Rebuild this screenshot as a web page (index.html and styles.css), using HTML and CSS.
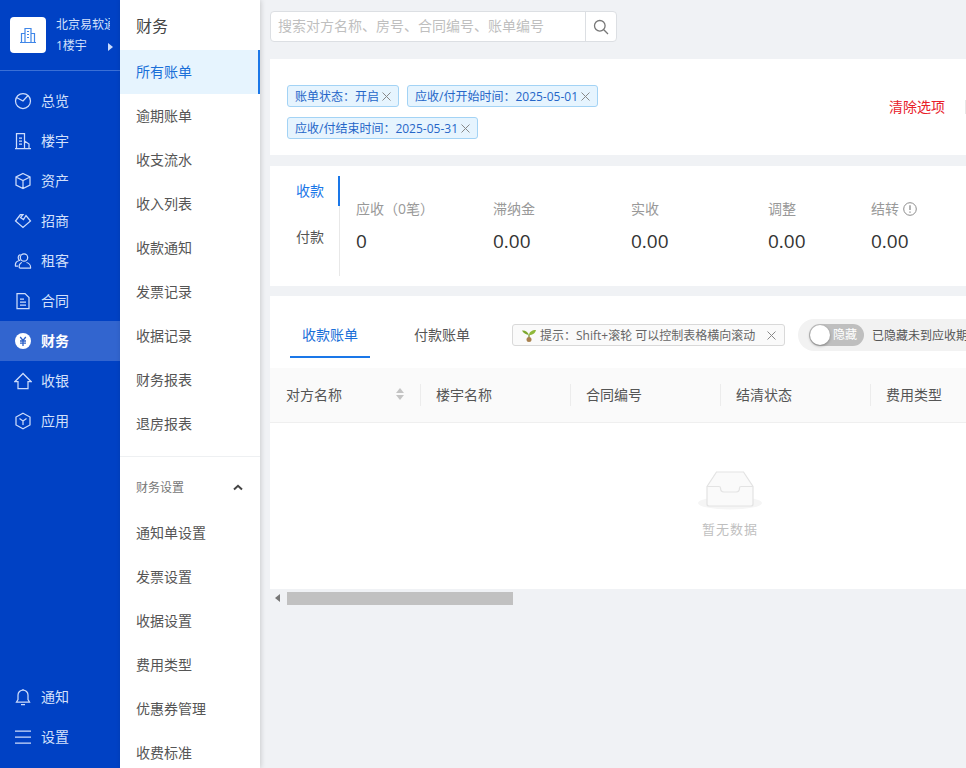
FILE: index.html
```html
<!DOCTYPE html>
<html lang="zh-CN">
<head>
<meta charset="utf-8">
<title>财务</title>
<link rel="stylesheet" href="styles.css">
</head>
<body>
<div class="app">
  <aside class="rail">
    <div class="org">
      <div class="org-logo">
        <svg width="18" height="18" viewBox="0 0 18 18" fill="none" stroke="#3f86e8" stroke-width="1.2"><path d="M1 16.500h16M6 16.500V2.500h6v14M2.500 16.500V7.500H6M12 7.500h3.500v9M8 5.500h2M8 8.500h2M8 11.500h2"/></svg>
      </div>
      <div class="org-text">
        <div class="org-name">北京易软通</div>
        <div class="org-sub"><span>1楼宇</span><i class="org-arrow"></i></div>
      </div>
    </div>
    <nav class="rail-nav">
      <a class="rail-item"><svg class="ri" viewBox="0 0 18 18"><circle cx="9" cy="9" r="7.500"/><path d="M2.500 5.500 9 9l5-5.500"/></svg>总览</a>
      <a class="rail-item"><svg class="ri" viewBox="0 0 18 18"><path d="M1 16.500h16M2.500 16.500V1.500h8v15M10.500 9l4.500 3v4.500M5 6h3M5 9h3M5 12h3"/></svg>楼宇</a>
      <a class="rail-item"><svg class="ri" viewBox="0 0 18 18"><path d="M9 1.500l7 3.500v8l-7 3.500L2 13V5zM2 5l7 3.500L16 5M9 8.500v8"/></svg>资产</a>
      <a class="rail-item"><svg class="ri" viewBox="0 0 18 18"><path d="M6.500 2.500 1.500 9 9 15.500 16.500 9 12 3.500 9.500 7.500 6.500 5.500 9 2.500z"/></svg>招商</a>
      <a class="rail-item"><svg class="ri" viewBox="0 0 18 18"><circle cx="10" cy="5.500" r="3.700"/><path d="M5.500 16h11c.5-3-2-5-4-5.500M8 10.500c-2 .5-3.500 3-2.500 5.500M6.500 2.500C4 3 3.500 6.500 5.500 8.500 3 9 1 11 1.500 14h2.500"/></svg>租客</a>
      <a class="rail-item"><svg class="ri" viewBox="0 0 18 18"><path d="M3 1.500h8l4 4v11H3zM6 7h4M6 10h6M6 13h6"/></svg>合同</a>
      <a class="rail-item rail-active"><svg class="ri-solid" viewBox="0 0 18 18"><circle cx="9" cy="9" r="8" fill="#fff"/><path d="M6.200 5 9 8.500 11.800 5M6 9h6M6 11.200h6M9 8.500V14" fill="none" stroke="#2f62c9" stroke-width="1.300"/></svg>财务</a>
      <a class="rail-item"><svg class="ri" viewBox="0 0 18 18"><path d="M9 1.500 1 9.500h3v7h10v-7h3z"/></svg>收银</a>
      <a class="rail-item"><svg class="ri" viewBox="0 0 18 18"><path d="M9 1.200 16 5v8l-7 3.800L2 13V5z"/><path d="M5.500 6.500 9 9l3.500-2.500M9 9v4"/></svg>应用</a>
    </nav>
    <div class="rail-bottom">
      <a class="rail-item"><svg class="ri" viewBox="0 0 18 18"><path d="M2.500 14h13l-1.500-2.500V7A5 5 0 0 0 4 7v4.500zM7 16.500h4M9 2V1"/></svg>通知</a>
      <a class="rail-item"><svg class="ri" viewBox="0 0 18 18"><path d="M1 3h16M1 9h16M1 15h16"/></svg>设置</a>
    </div>
  </aside>

  <aside class="sub">
    <h2 class="sub-title">财务</h2>
    <a class="sub-item sub-active">所有账单</a>
    <a class="sub-item">逾期账单</a>
    <a class="sub-item">收支流水</a>
    <a class="sub-item">收入列表</a>
    <a class="sub-item">收款通知</a>
    <a class="sub-item">发票记录</a>
    <a class="sub-item">收据记录</a>
    <a class="sub-item">财务报表</a>
    <a class="sub-item">退房报表</a>
    <div class="sub-group">
      <span>财务设置</span>
      <svg width="10" height="7" viewBox="0 0 10 7" fill="none" stroke="#444" stroke-width="2"><path d="M1 5.500 5 1.800l4 3.700"/></svg>
    </div>
    <a class="sub-item">通知单设置</a>
    <a class="sub-item">发票设置</a>
    <a class="sub-item">收据设置</a>
    <a class="sub-item">费用类型</a>
    <a class="sub-item">优惠券管理</a>
    <a class="sub-item">收费标准</a>
  </aside>

  <main class="main">
    <div class="search">
      <div class="search-input">搜索对方名称、房号、合同编号、账单编号</div>
      <div class="search-btn">
        <svg width="16" height="16" viewBox="0 0 16 16" fill="none" stroke="#777" stroke-width="1.300"><circle cx="6.800" cy="6.800" r="5.300"/><path d="m10.800 10.800 4.200 4.200"/></svg>
      </div>
    </div>

    <section class="card filters">
      <div class="tags">
        <span class="tag">账单状态：开启<svg class="x" viewBox="0 0 9 9"><path d="M.5.500l8 8M8.500.500l-8 8"/></svg></span>
        <span class="tag">应收/付开始时间：2025-05-01<svg class="x" viewBox="0 0 9 9"><path d="M.5.500l8 8M8.500.500l-8 8"/></svg></span>
        <span class="tag">应收/付结束时间：2025-05-31<svg class="x" viewBox="0 0 9 9"><path d="M.5.500l8 8M8.500.500l-8 8"/></svg></span>
      </div>
      <a class="clear">清除选项</a>
      <span class="more-btn"></span>
    </section>

    <section class="card stats">
      <div class="stat-tabs">
        <a class="stat-tab stat-tab-on">收款</a>
        <a class="stat-tab">付款</a>
      </div>
      <div class="stat-grid">
        <div><div class="stat-label">应收（0笔）</div><div class="stat-val">0</div></div>
        <div><div class="stat-label">滞纳金</div><div class="stat-val">0.00</div></div>
        <div><div class="stat-label">实收</div><div class="stat-val">0.00</div></div>
        <div><div class="stat-label">调整</div><div class="stat-val">0.00</div></div>
        <div><div class="stat-label">结转<svg class="info" width="14" height="14" viewBox="0 0 14 14" fill="none" stroke="#8c8c8c"><circle cx="7" cy="7" r="6.300"/><path d="M7 3.300v4.700M7 9.500v1.300" stroke-width="1.300"/></svg></div><div class="stat-val">0.00</div></div>
      </div>
    </section>

    <section class="card table-card">
      <div class="toolbar">
        <div class="tabs">
          <a class="tab tab-on">收款账单</a>
          <a class="tab">付款账单</a>
        </div>
        <div class="hint">
          <svg width="16" height="16" viewBox="0 0 16 16"><path d="M8 8C7 5 4 3 1 3.500 2 6 5 7.500 8 8z" fill="#7da82f"/><path d="M8 8c0-3 3-5 7-5-.5 3-3.500 5-7 5z" fill="#8fb83a"/><path d="M8 8v3" stroke="#6b8a2a" stroke-width="1.200"/><circle cx="8" cy="12.500" r="2.500" fill="#a8814e"/></svg>
          <span class="hint-text">提示：Shift+滚轮 可以控制表格横向滚动</span>
          <svg class="x hint-x" viewBox="0 0 9 9"><path d="M.5.500l8 8M8.500.500l-8 8"/></svg>
        </div>
        <div class="toggle-wrap">
          <span class="toggle"><i class="knob"></i><span class="toggle-label">隐藏</span></span>
          <span class="toggle-text">已隐藏未到应收期的账单</span>
        </div>
      </div>
      <div class="thead">
        <div class="th th-first">对方名称<span class="sorter"><i class="up"></i><i class="down"></i></span></div>
        <div class="th">楼宇名称</div>
        <div class="th">合同编号</div>
        <div class="th">结清状态</div>
        <div class="th">费用类型</div>
      </div>
      <div class="empty">
        <svg width="64" height="42" viewBox="0 0 64 42">
          <ellipse cx="32" cy="35" rx="32" ry="6.500" fill="#f5f5f5"/>
          <path d="M9 18.500 18.500 4h27L55 18.500V36a2 2 0 0 1-2 2H11a2 2 0 0 1-2-2z" fill="#fafafa" stroke="#e3e3e3" stroke-width="1.200"/>
          <path d="M9 18.500h12c1 0 1.500 .5 1.500 1.500 0 3 1.500 4 3.500 4h12c2 0 3.500-1 3.500-4 0-1 .5-1.500 1.500-1.500H55" fill="none" stroke="#e3e3e3" stroke-width="1.200"/>
        </svg>
        <div class="empty-text">暂无数据</div>
      </div>
    </section>

    <div class="hscroll">
      <i class="hscroll-left"></i>
      <i class="hscroll-thumb"></i>
    </div>
  </main>
</div>
</body>
</html>
```

FILE: styles.css
```css
* { box-sizing: border-box; }
html, body { margin: 0; padding: 0; height: 100%; overflow: hidden; }
body { font-family: "Open Sans", "Noto Sans CJK SC", sans-serif; font-size: 14px; color: #333; background: #f0f2f5; }
a { text-decoration: none; color: inherit; }
i { font-style: normal; }

.app { display: flex; width: 966px; height: 768px; overflow: hidden; }

/* primary rail */
.rail { flex: none; width: 120px; height: 100%; background: #0041c4; display: flex; flex-direction: column; color: #d3e0fb; }
.org { height: 71px; padding: 17px 0 0 10px; display: flex; border-bottom: 1px solid #3a6fd6; }
.org-logo { width: 36px; height: 36px; background: #fff; border-radius: 4px; display: flex; align-items: center; justify-content: center; }
.org-text { width: 54px; margin-left: 10px; font-size: 12px; line-height: 21px; }
.org-name { margin-top: -3px; white-space: nowrap; overflow: hidden; height: 21px; }
.org-sub { display: flex; align-items: center; justify-content: space-between; width: 57px; }
.org-arrow { width: 0; height: 0; margin-top: 3px; border-left: 5px solid #c9dafb; border-top: 4px solid transparent; border-bottom: 4px solid transparent; }
.rail-nav { margin-top: 10px; flex: 1; }
.rail-item { display: flex; align-items: center; height: 40px; padding-left: 14px; font-size: 14px; line-height: 40px; }
.ri { width: 18px; height: 18px; margin-right: 9px; fill: none; stroke: #cddcfb; stroke-width: 1.250; flex: none; }
.ri-solid { width: 18px; height: 18px; margin-right: 9px; flex: none; }
.rail-active { background: #3265cf; color: #fff; font-weight: 700; }
.rail-bottom { padding-bottom: 11px; }

/* secondary menu */
.sub { position: relative; z-index: 2; flex: none; width: 140px; height: 100%; background: #fff; box-shadow: 1px 0 5px rgba(0, 0, 0, .16); overflow: hidden; }
.sub-title { margin: 0; height: 50px; padding-left: 16px; font-size: 16px; font-weight: 400; line-height: 52px; color: #444; }
.sub-item { display: block; height: 44px; padding-left: 16px; line-height: 44px; font-size: 14px; color: #555; }
.sub-active { background: #e6f4fe; color: #1a6fd8; border-right: 2px solid #1a77e8; }
.sub-group { display: flex; align-items: center; justify-content: space-between; height: 55px; margin-top: 10px; padding: 6px 17px 0 16px; border-top: 1px solid #eef0f2; font-size: 12px; color: #777; }

/* main column */
.main { flex: 1; min-width: 0; padding: 11px 0 0 10px; overflow: hidden; }
.search { display: flex; width: 347px; height: 31px; background: #fff; border: 1px solid #dcdfe3; border-radius: 4px; }
.search-input { flex: 1; padding-left: 7px; line-height: 28px; font-size: 14px; color: #bfbfbf; white-space: nowrap; }
.search-btn { flex: none; width: 31px; border-left: 1px solid #dcdfe3; display: flex; align-items: center; justify-content: center; }

.card { background: #fff; width: 1000px; }

.filters { display: flex; align-items: center; height: 96px; margin-top: 17px; padding-left: 17px; }
.tags { display: flex; flex-wrap: wrap; align-content: center; gap: 10px 8px; width: 602px; padding: 10px 280px 0 0; }
.tag { display: inline-flex; align-items: center; height: 22px; padding: 0 7px; background: #e6f4fe; border: 1px solid #a3d3f5; border-radius: 3px; font-size: 12px; color: #2566c8; white-space: nowrap; }
.x { flex: none; width: 9px; height: 9px; margin-left: 3px; fill: none; stroke: #888; stroke-width: 1; }
.clear { color: #e8202a; font-size: 14px; width: 56px; margin-top: -2px; white-space: nowrap; }
.more-btn { width: 40px; height: 14px; margin-left: 20px; border-left: 1px solid #e8e8e8; }

.stats { display: flex; height: 120px; margin-top: 11px; padding-top: 10px; }
.stat-tabs { flex: none; width: 70px; height: 100px; border-right: 1px solid #e8e8e8; }
.stat-tab { display: block; height: 30px; margin-right: -1px; padding-left: 26px; line-height: 30px; font-size: 14px; color: #555; }
.stat-tab + .stat-tab { margin-top: 16px; }
.stat-tab-on { color: #1a77e8; border-right: 2px solid #1a77e8; }
.stat-grid { display: grid; grid-template-columns: 137px 138px 137px 103px 137px; margin-left: 16px; padding-top: 23px; }
.stat-label { height: 20px; line-height: 20px; font-size: 14px; color: #999; display: flex; align-items: center; white-space: nowrap; }
.info { margin-left: 4px; }
.stat-val { margin-top: 10px; font-size: 19px; line-height: 24px; color: #333; }

.table-card { margin-top: 10px; height: 293px; display: flex; flex-direction: column; }
.toolbar { display: flex; align-items: center; height: 72px; padding-left: 20px; }
.tabs { display: flex; align-self: flex-start; height: 62px; flex: none; }
.tab { display: block; width: 80px; height: 62px; padding-top: 28px; text-align: center; line-height: 22px; font-size: 14px; color: #555; }
.tab-on { color: #1a6fd8; border-bottom: 2px solid #1a77e8; }
.tab + .tab { width: 56px; margin-left: 44px; margin-right: 42px; }
.hint { display: flex; align-items: center; flex: none; width: 273px; height: 22px; padding-left: 8px; border: 1px solid #d9d9d9; border-radius: 3px; background: #fafafa; font-size: 12px; color: #666; white-space: nowrap; margin-top: 6px; }
.hint-text { margin-left: 3px; }
.hint-x { margin-left: auto; margin-right: 8px; }
.toggle-wrap { display: flex; align-items: center; flex: none; height: 32px; margin-left: 13px; padding-left: 11px; background: #f2f2f2; border-radius: 16px; margin-top: 6px; font-size: 12px; color: #555; white-space: nowrap; }
.toggle { position: relative; display: block; width: 55px; height: 22px; background: #bfbfbf; border-radius: 11px; }
.knob { position: absolute; left: 1px; top: 1px; width: 20px; height: 20px; background: #fff; border-radius: 50%; box-shadow: 0 1px 3px rgba(0, 0, 0, .35); }
.toggle-label { position: absolute; left: 24px; top: 0; line-height: 22px; color: #fff; font-size: 12px; }
.toggle-text { margin-left: 8px; padding-right: 12px; }

.thead { display: flex; height: 55px; flex: none; background: #fafafa; border-bottom: 1px solid #efefef; }
.th { position: relative; display: flex; align-items: center; flex: none; width: 150px; padding: 0 0 3px 16px; font-size: 14px; color: #555; }
.th + .th::before { content: ""; position: absolute; left: 0; top: 16px; height: 22px; width: 1px; background: #ececec; }
.th-first { padding-right: 16px; justify-content: space-between; }
.sorter { display: flex; flex-direction: column; gap: 2px; }
.up { width: 0; height: 0; border: 4px solid transparent; border-top: 0; border-bottom: 5px solid #c4c4c4; }
.down { width: 0; height: 0; border: 4px solid transparent; border-bottom: 0; border-top: 5px solid #c4c4c4; }

.empty { flex: 1; width: 920px; display: flex; flex-direction: column; align-items: center; padding-top: 45px; }
.empty-text { margin-top: 9px; font-size: 13px; line-height: 20px; color: #bfbfbf; letter-spacing: 1px; }

.hscroll { display: flex; align-items: center; height: 16px; margin-top: 1px; }
.hscroll-left { width: 0; height: 0; margin-left: 5px; border-right: 5px solid #777; border-top: 4px solid transparent; border-bottom: 4px solid transparent; }
.hscroll-thumb { width: 226px; height: 13px; margin-left: 7px; background: #c1c1c1; }
```
